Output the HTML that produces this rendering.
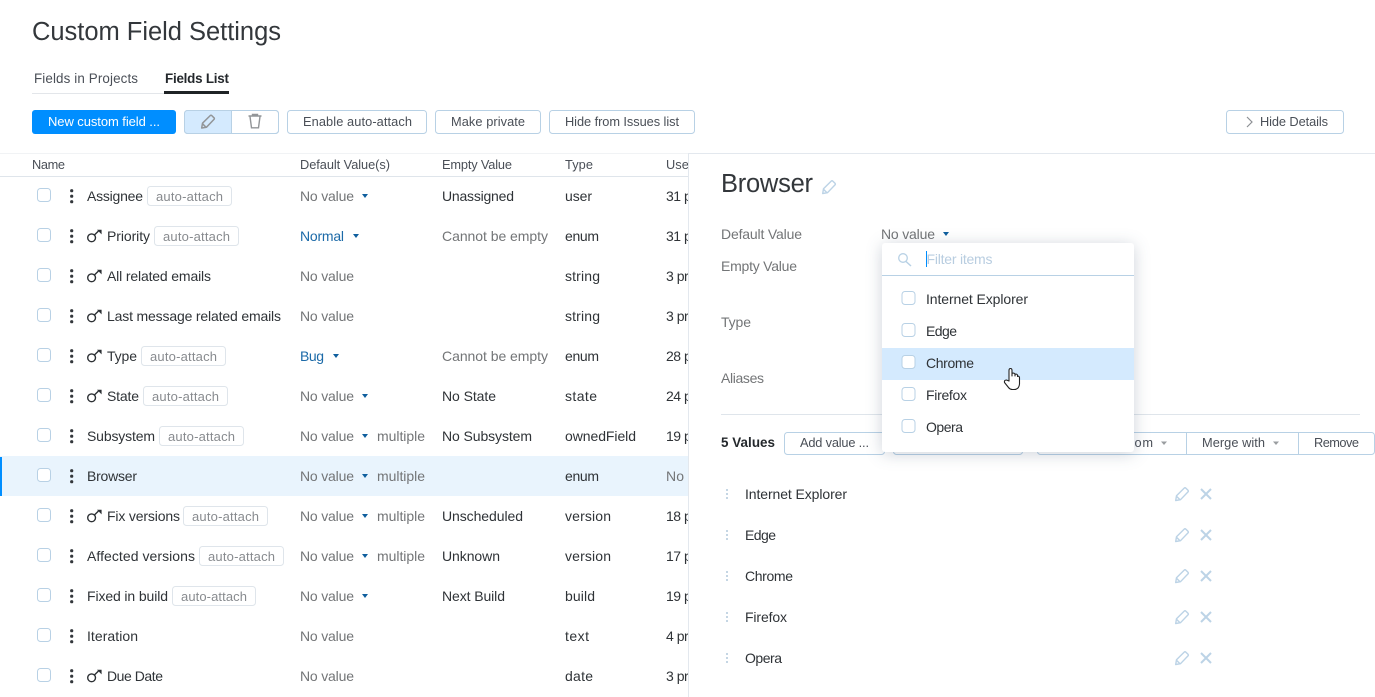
<!DOCTYPE html>
<html lang="en"><head><meta charset="utf-8"><title>Custom Field Settings</title>
<style>
html,body{margin:0;padding:0;background:#fff;overflow:hidden;width:1375px;height:697px}
svg{display:block;font-family:"Liberation Sans",sans-serif;font-size:14px}
text{fill:#2f3337}
.g{fill:#737577}.l{fill:#6d7074}.b{fill:#1c6aa8}.m{fill:#4a4f57;font-size:12.8px}.t{fill:#888b8f;font-size:13px}
.bo{font-weight:bold;fill:#24282c;font-size:13.4px}
.cb{fill:#fff;stroke:#b8d1e5}.tag{fill:#fff;stroke:#dfe5eb}
.btn{fill:#fff;stroke:#b8d1e5}
.arr{fill:#0f5f9e}
.pen{fill:none;stroke:#bcd3e6;stroke-width:1.4;stroke-linejoin:round}
</style></head><body>
<svg width="1375" height="697" viewBox="0 0 1375 697" xmlns="http://www.w3.org/2000/svg">
<defs>
<g id="cbx"><rect class="cb" x="37.5" y="-7.5" width="13" height="13" rx="3"/></g>
<g id="dots" fill="#33373b"><circle cx="71.7" cy="-5.3" r="1.6"/><circle cx="71.7" cy="0.2" r="1.6"/><circle cx="71.7" cy="5.7" r="1.6"/></g>
<g id="key"><circle cx="91.6" cy="1.8" r="3.9" fill="none" stroke="#2c3034" stroke-width="1.4"/><path d="M94.4 -1L98.5 -5" stroke="#2c3034" stroke-width="1.4" fill="none"/><path d="M97 -6.2H101.6V-1.6Z" fill="#2c3034"/></g>
<path id="arrow" class="arr" d="M0 0H6L3 4Z"/>
<g id="pen"><path class="pen" d="M0.7 13.500L1.500 8.700L9.200 1.100Q10 .4 10.800 1.100L13 3.300Q13.700 4.100 13 4.900L5.500 12.700ZM1.500 9.200L5 12.800"/></g>
<g id="xx"><path d="M1 1L11 11M11 1L1 11" stroke="#bcd3e6" stroke-width="2" fill="none"/></g>
<g id="vd" fill="#b3c9dc"><circle cx="727" cy="-4" r="1"/><circle cx="727" cy="0" r="1"/><circle cx="727" cy="4" r="1"/></g>
</defs>

<text x="32" y="40" textLength="249" style="font-size:25.5px;fill:#33373b">Custom Field Settings</text>
<text x="34" y="83" textLength="104" class="m" style="font-size:13.4px">Fields in Projects</text>
<text x="165" y="83" textLength="64" class="bo">Fields List</text>
<rect x="32" y="93" width="132" height="1" fill="#e3e6ea"/>
<rect x="164" y="91" width="65" height="3" fill="#1f2326"/>

<rect x="32" y="110" width="144" height="24" rx="3" fill="#008eff"/>
<text x="48" y="126" textLength="112" style="fill:#fff;font-size:13px">New custom field ...</text>
<rect class="btn" x="184.5" y="110.5" width="94" height="23" rx="3"/>
<path d="M185 111H231V133H185Z" fill="#d4eafe"/>
<rect class="btn" x="184.5" y="110.5" width="94" height="23" rx="3" style="fill:none"/>
<path d="M231.5 110V134" stroke="#b8d1e5"/>
<g transform="translate(201,114.500)"><path d="M0.7 13.500L1.500 8.700L9.200 1.100Q10 .4 10.800 1.100L13 3.300Q13.700 4.100 13 4.900L5.500 12.700ZM1.500 9.200L5 12.800" fill="none" stroke="#929598" stroke-width="1.500" stroke-linejoin="round"/></g>
<path d="M248.500 116H261.500M252.500 116V114.500H257.500V116M250 116.500L251.500 127.800H258.500L260 116.500" fill="none" stroke="#929598" stroke-width="1.400"/>
<rect class="btn" x="287.5" y="110.500" width="139" height="23" rx="3"/>
<text x="303" y="126" textLength="109" class="m">Enable auto-attach</text>
<rect class="btn" x="435.5" y="110.500" width="105" height="23" rx="3"/>
<text x="451" y="126" textLength="74" class="m">Make private</text>
<rect class="btn" x="549.5" y="110.500" width="145" height="23" rx="3"/>
<text x="565" y="126" textLength="114" class="m">Hide from Issues list</text>
<rect class="btn" x="1226.500" y="110.500" width="117" height="23" rx="3"/>
<path d="M1247 117L1252 122L1247 127" fill="none" stroke="#8d9094" stroke-width="1.200"/>
<text x="1260" y="126" textLength="68" class="m">Hide Details</text>

<rect x="0" y="153" width="689" height="1" fill="#f1f3f5"/>
<text x="32" y="169" textLength="33" class="m">Name</text>
<text x="300" y="169" textLength="90" class="m">Default Value(s)</text>
<text x="442" y="169" textLength="70" class="m">Empty Value</text>
<text x="565" y="169" textLength="28" class="m">Type</text>
<text x="666" y="169" textLength="30" class="m">Used</text>
<rect x="0" y="176" width="689" height="1" fill="#dfe5eb"/>

<rect x="0" y="456" width="689" height="40" fill="#e9f4fd"/>
<rect x="0" y="457" width="2" height="39" fill="#008eff"/>

<g transform="translate(0,196)"><use href="#cbx"/><use href="#dots"/>
<text x="87" y="5" textLength="56">Assignee</text><rect class="tag" x="147.500" y="-9.500" width="84" height="19" rx="3"/><text class="t" x="156" y="5" textLength="67">auto-attach</text>
<text class="g" x="300" y="5" textLength="54">No value</text><use href="#arrow" x="362" y="-2"/>
<text x="442" y="5" textLength="72">Unassigned</text><text x="565" y="5" textLength="27">user</text><text x="666" y="5" textLength="30">31 pr</text></g>

<g transform="translate(0,236)"><use href="#cbx"/><use href="#dots"/><use href="#key"/>
<text x="107" y="5" textLength="43">Priority</text><rect class="tag" x="154.500" y="-9.500" width="84" height="19" rx="3"/><text class="t" x="163" y="5" textLength="67">auto-attach</text>
<text class="b" x="300" y="5" textLength="44">Normal</text><use href="#arrow" x="353" y="-2"/>
<text class="g" x="442" y="5" textLength="106">Cannot be empty</text><text x="565" y="5" textLength="34">enum</text><text x="666" y="5" textLength="30">31 pr</text></g>

<g transform="translate(0,276)"><use href="#cbx"/><use href="#dots"/><use href="#key"/>
<text x="107" y="5" textLength="104">All related emails</text>
<text class="g" x="300" y="5" textLength="54">No value</text>
<text x="565" y="5" textLength="35">string</text><text x="666" y="5" textLength="30">3 pro</text></g>

<g transform="translate(0,316)"><use href="#cbx"/><use href="#dots"/><use href="#key"/>
<text x="107" y="5" textLength="174">Last message related emails</text>
<text class="g" x="300" y="5" textLength="54">No value</text>
<text x="565" y="5" textLength="35">string</text><text x="666" y="5" textLength="30">3 pro</text></g>

<g transform="translate(0,356)"><use href="#cbx"/><use href="#dots"/><use href="#key"/>
<text x="107" y="5" textLength="30">Type</text><rect class="tag" x="141.500" y="-9.500" width="84" height="19" rx="3"/><text class="t" x="150" y="5" textLength="67">auto-attach</text>
<text class="b" x="300" y="5" textLength="24">Bug</text><use href="#arrow" x="333" y="-2"/>
<text class="g" x="442" y="5" textLength="106">Cannot be empty</text><text x="565" y="5" textLength="34">enum</text><text x="666" y="5" textLength="30">28 pr</text></g>

<g transform="translate(0,396)"><use href="#cbx"/><use href="#dots"/><use href="#key"/>
<text x="107" y="5" textLength="32">State</text><rect class="tag" x="143.500" y="-9.500" width="84" height="19" rx="3"/><text class="t" x="152" y="5" textLength="67">auto-attach</text>
<text class="g" x="300" y="5" textLength="54">No value</text><use href="#arrow" x="362" y="-2"/>
<text x="442" y="5" textLength="54">No State</text><text x="565" y="5" textLength="32">state</text><text x="666" y="5" textLength="30">24 pr</text></g>

<g transform="translate(0,436)"><use href="#cbx"/><use href="#dots"/>
<text x="87" y="5" textLength="68">Subsystem</text><rect class="tag" x="159.500" y="-9.500" width="84" height="19" rx="3"/><text class="t" x="168" y="5" textLength="67">auto-attach</text>
<text class="g" x="300" y="5" textLength="54">No value</text><use href="#arrow" x="362" y="-2"/><text class="g" x="377" y="5" textLength="48">multiple</text>
<text x="442" y="5" textLength="90">No Subsystem</text><text x="565" y="5" textLength="71">ownedField</text><text x="666" y="5" textLength="30">19 pr</text></g>

<g transform="translate(0,476)"><use href="#cbx"/><use href="#dots"/>
<text x="87" y="5" textLength="50">Browser</text>
<text class="g" x="300" y="5" textLength="54">No value</text><use href="#arrow" x="362" y="-2"/><text class="g" x="377" y="5" textLength="48">multiple</text>
<text x="565" y="5" textLength="34">enum</text><text class="g" x="666" y="5" textLength="18">No</text></g>

<g transform="translate(0,516)"><use href="#cbx"/><use href="#dots"/><use href="#key"/>
<text x="107" y="5" textLength="73">Fix versions</text><rect class="tag" x="183.500" y="-9.500" width="84" height="19" rx="3"/><text class="t" x="192" y="5" textLength="67">auto-attach</text>
<text class="g" x="300" y="5" textLength="54">No value</text><use href="#arrow" x="362" y="-2"/><text class="g" x="377" y="5" textLength="48">multiple</text>
<text x="442" y="5" textLength="81">Unscheduled</text><text x="565" y="5" textLength="46">version</text><text x="666" y="5" textLength="30">18 pr</text></g>

<g transform="translate(0,556)"><use href="#cbx"/><use href="#dots"/>
<text x="87" y="5" textLength="108">Affected versions</text><rect class="tag" x="199.500" y="-9.500" width="84" height="19" rx="3"/><text class="t" x="208" y="5" textLength="67">auto-attach</text>
<text class="g" x="300" y="5" textLength="54">No value</text><use href="#arrow" x="362" y="-2"/><text class="g" x="377" y="5" textLength="48">multiple</text>
<text x="442" y="5" textLength="58">Unknown</text><text x="565" y="5" textLength="46">version</text><text x="666" y="5" textLength="30">17 pr</text></g>

<g transform="translate(0,596)"><use href="#cbx"/><use href="#dots"/>
<text x="87" y="5" textLength="81">Fixed in build</text><rect class="tag" x="172.500" y="-9.500" width="83" height="19" rx="3"/><text class="t" x="181" y="5" textLength="66">auto-attach</text>
<text class="g" x="300" y="5" textLength="54">No value</text><use href="#arrow" x="362" y="-2"/>
<text x="442" y="5" textLength="63">Next Build</text><text x="565" y="5" textLength="30">build</text><text x="666" y="5" textLength="30">19 pr</text></g>

<g transform="translate(0,636)"><use href="#cbx"/><use href="#dots"/>
<text x="87" y="5" textLength="51">Iteration</text>
<text class="g" x="300" y="5" textLength="54">No value</text>
<text x="565" y="5" textLength="24">text</text><text x="666" y="5" textLength="30">4 pro</text></g>

<g transform="translate(0,676)"><use href="#cbx"/><use href="#dots"/><use href="#key"/>
<text x="107" y="5" textLength="56">Due Date</text>
<text class="g" x="300" y="5" textLength="54">No value</text>
<text x="565" y="5" textLength="28">date</text><text x="666" y="5" textLength="30">3 pro</text></g>

<!-- details panel -->
<rect x="688.500" y="153.500" width="700" height="560" fill="#fff" stroke="#e3e8ee"/>
<text x="721" y="192" textLength="92" style="font-size:25.5px;fill:#33373b">Browser</text>
<use href="#pen" x="822" y="180"/>
<text class="g" x="721" y="239" textLength="81">Default Value</text>
<text class="g" x="881" y="239" textLength="54">No value</text><use href="#arrow" x="943" y="232"/>
<text class="g" x="721" y="271" textLength="76">Empty Value</text>
<text class="g" x="721" y="327" textLength="30">Type</text>
<text class="g" x="721" y="383" textLength="43">Aliases</text>
<rect x="721" y="414" width="639" height="1" fill="#dfe5eb"/>
<text class="bo" x="721" y="447" textLength="54">5 Values</text>
<rect class="btn" x="784.500" y="432.500" width="100" height="22" rx="3"/>
<text class="m" x="800" y="447" textLength="69">Add value ...</text>
<rect class="btn" x="893.500" y="432.500" width="129" height="22" rx="3"/>
<rect class="btn" x="1037.500" y="432.500" width="337" height="22" rx="3"/>
<path d="M1186.500 432V455M1298.500 432V455" stroke="#b8d1e5"/>
<text class="m" x="1081" y="447" textLength="72">Import from</text>
<path d="M1161 441.500H1167L1164 445Z" fill="#9a9da0"/>
<text class="m" x="1202" y="447" textLength="63">Merge with</text>
<path d="M1273 441.500H1279L1276 445Z" fill="#9a9da0"/>
<text class="m" x="1314" y="447" textLength="45">Remove</text>

<g transform="translate(0,494)"><use href="#vd"/><text x="745" y="5" textLength="102">Internet Explorer</text><use href="#pen" x="1175" y="-7"/><use href="#xx" x="1200" y="-6"/></g>
<g transform="translate(0,535)"><use href="#vd"/><text x="745" y="5" textLength="31">Edge</text><use href="#pen" x="1175" y="-7"/><use href="#xx" x="1200" y="-6"/></g>
<g transform="translate(0,576)"><use href="#vd"/><text x="745" y="5" textLength="48">Chrome</text><use href="#pen" x="1175" y="-7"/><use href="#xx" x="1200" y="-6"/></g>
<g transform="translate(0,617)"><use href="#vd"/><text x="745" y="5" textLength="42">Firefox</text><use href="#pen" x="1175" y="-7"/><use href="#xx" x="1200" y="-6"/></g>
<g transform="translate(0,658)"><use href="#vd"/><text x="745" y="5" textLength="37">Opera</text><use href="#pen" x="1175" y="-7"/><use href="#xx" x="1200" y="-6"/></g>

<!-- dropdown -->
<rect x="882" y="243" width="252" height="209" rx="3" fill="#fff" style="filter:drop-shadow(0 2px 8px rgba(31,55,85,.22))"/>
<circle cx="903" cy="258" r="4.300" fill="none" stroke="#b8d1e5" stroke-width="1.300"/>
<path d="M906 261.500L911 266" stroke="#b8d1e5" stroke-width="1.500"/>
<rect x="926" y="251" width="1" height="16" fill="#008eff"/>
<text x="926.500" y="264" textLength="66" style="fill:#b8cde0">Filter items</text>
<rect x="882" y="275" width="252" height="1" fill="#b8d1e5"/>
<rect x="882" y="348" width="252" height="32" fill="#d4eafe"/>
<g transform="translate(864.500,299)"><use href="#cbx"/></g>
<text x="926" y="304" textLength="102">Internet Explorer</text>
<g transform="translate(864.500,331)"><use href="#cbx"/></g>
<text x="926" y="336" textLength="31">Edge</text>
<g transform="translate(864.500,363)"><use href="#cbx"/></g>
<text x="926" y="368" textLength="48">Chrome</text>
<g transform="translate(864.500,395)"><use href="#cbx"/></g>
<text x="926" y="400" textLength="41">Firefox</text>
<g transform="translate(864.500,427)"><use href="#cbx"/></g>
<text x="926" y="432" textLength="37">Opera</text>

<path d="M1009 381V370.500Q1009 368.500 1010.500 368.500Q1012 368.500 1012 370.500V376V373.500Q1013.500 372.500 1015 374V376V374.500Q1016.500 373.500 1017.500 375V376.500Q1019 375.500 1019.500 377.500V384Q1019 389.500 1014 389.500H1012.500Q1010 389.500 1008.500 387.500L1004.500 382.500Q1004 380 1006.500 380Z" fill="#fff" stroke="#222" stroke-width="1.100" stroke-linejoin="round"/>
</svg>
</body></html>
